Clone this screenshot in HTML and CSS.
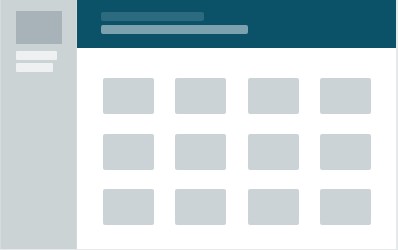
FILE: index.html
```html
<!DOCTYPE html>
<html>
<head>
<meta charset="utf-8">
<link rel="stylesheet" href="styles.css">
</head>
<body>
<div class="app">
  <aside class="sidebar">
    <div class="avatar"></div>
    <div class="line line-a"></div>
    <div class="line line-b"></div>
  </aside>
  <div class="main">
    <header class="header">
      <div class="hbar hbar-a"></div>
      <div class="hbar hbar-b"></div>
    </header>
    <div class="grid">
      <div class="card"></div><div class="card"></div><div class="card"></div><div class="card"></div>
      <div class="card"></div><div class="card"></div><div class="card"></div><div class="card"></div>
      <div class="card"></div><div class="card"></div><div class="card"></div><div class="card"></div>
    </div>
  </div>
</div>
</body>
</html>
```
FILE: styles.css
```css
html, body { margin: 0; padding: 0; background: #ffffff; }
.app {
  width: 398px;
  height: 250px;
  display: flex;
  box-sizing: border-box;
  border-right: 2px solid #e6e9ea;
  border-bottom: 1px solid #e6e9ea;
  overflow: hidden;
}
.sidebar {
  width: 77px;
  flex: none;
  background: #ccd3d5;
  box-sizing: border-box;
  padding: 11px 0 0 15px;
  display: flex;
  flex-direction: column;
  border-left: 1px solid #d6dcde;
  border-right: 1px solid #d4dadc;
}
.avatar {
  width: 46px;
  height: 33px;
  background: #a7b3b8;
}
.line {
  height: 9px;
  background: #eef0f1;
  border-radius: 1px;
}
.line-a { width: 41px; margin-top: 7px; }
.line-b { width: 37px; margin-top: 3px; }
.main {
  flex: 1;
  display: flex;
  flex-direction: column;
}
.header {
  height: 48px;
  background: #0b5168;
  box-sizing: border-box;
  padding: 12px 0 0 24px;
  display: flex;
  flex-direction: column;
}
.hbar { border-radius: 2px; }
.hbar-a { width: 103px; height: 9px; background: #2c6a80; }
.hbar-b { width: 147px; height: 9px; background: #7da2af; margin-top: 4px; }
.grid {
  display: grid;
  grid-template-columns: repeat(4, 51px);
  grid-auto-rows: 36px;
  column-gap: 21.33px;
  row-gap: 19.5px;
  padding: 30px 0 0 26px;
}
.card {
  background: #ccd3d6;
  border-radius: 2px;
}
```
